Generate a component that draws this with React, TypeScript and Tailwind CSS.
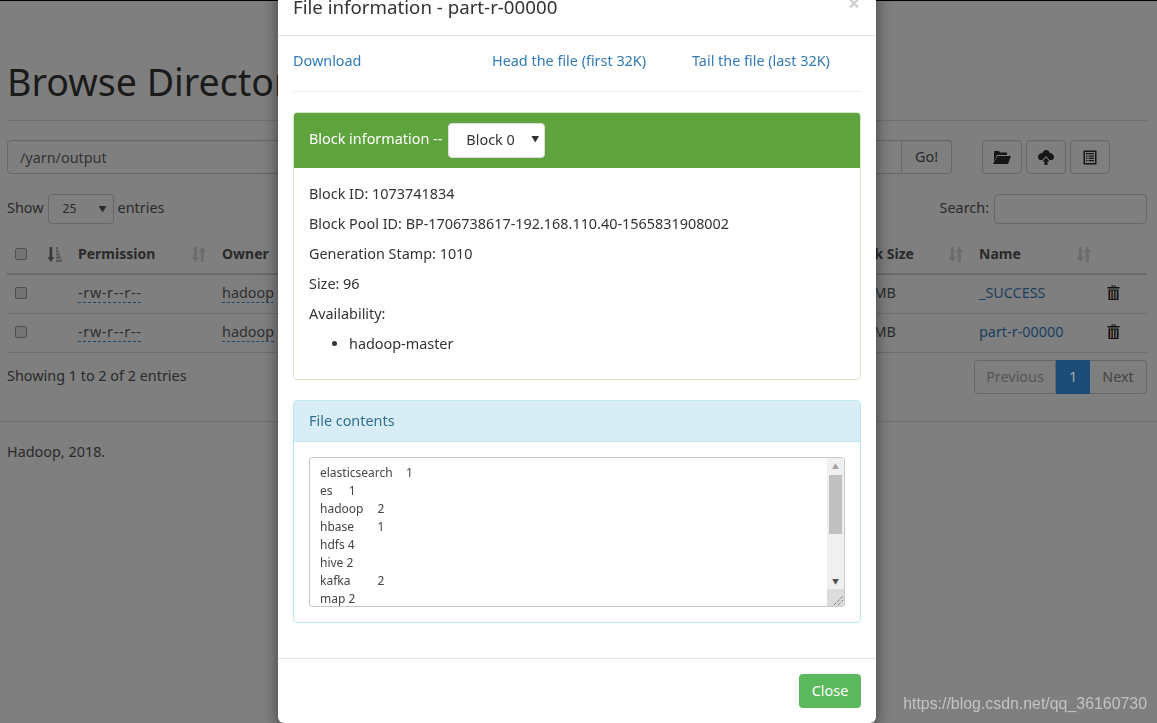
import React from "react";

const font = "font-['Noto_Sans','Noto_Sans_CJK_SC',sans-serif]";

function SortBoth() {
  return (
    <svg width="16" height="15" viewBox="0 0 16 15" className="text-[#6c6c6c]" fill="currentColor">
      <path d="M2.800 0h3v10h2.400L4.300 15 .4 10h2.400zM9.800 5H7.400L11.300 0l3.900 5h-2.400v10h-3z" />
    </svg>
  );
}
function SortAsc() {
  return (
    <svg width="15" height="15" viewBox="0 0 15 15">
      <path d="M2.500 0h2.800v10h2L3.900 15 .5 10h2z" fill="#3a3a3a" />
      <path d="M9 0h2v2.200H9zM9 3.200h3v2.200H9zM9 6.400h4v2.200H9zM9 9.600h5v2.200H9zM9 12.800h6V15H9z" fill="#585858" />
    </svg>
  );
}
function Trash() {
  return (
    <svg width="13" height="15" viewBox="0 0 13 15">
      <path d="M4.500 0.500h4v1.500h4v1.500H.5V2h4zM5.500 1.300v.7h2v-.7z" fill="#111" fillRule="evenodd" />
      <path d="M1.500 4.500h10v10.500h-10z" fill="#111" />
      <path d="M3 5.500h1.500V14H3z" fill="#8a5a5a" />
      <path d="M5.750 5.500h1.500V14h-1.500z" fill="#6e7a52" />
      <path d="M8.500 5.500H10V14H8.500z" fill="#5a6a8a" />
    </svg>
  );
}
function FolderOpen() {
  return (
    <svg width="18" height="14" viewBox="0 0 18 14" fill="#161616">
      <path d="M1 1h5l1 1.500h7V5H4L1 12z" />
      <path d="M4.500 6H18l-3 8H0z" />
    </svg>
  );
}
function CloudUpload() {
  return (
    <svg width="16" height="15" viewBox="0 0 16 15" fill="#161616">
      <path d="M4.500 3C5 1 6.500 0 8 0c2 0 3.300 1.200 3.700 3C14 3 16 4.800 16 7c0 1.500-1 2.600-2 3h-2.500L8 6 4.500 10H2C.8 9.500 0 8.300 0 7c0-2 2-4 4.500-4z" />
      <path d="M8 7.500 11.500 11.500H9.500V15h-3v-3.500h-2z" />
    </svg>
  );
}
function ListAlt() {
  return (
    <svg width="14" height="15" viewBox="0 0 14 15">
      <path d="M.5.500h13v14H.5z" fill="#161616" />
      <path d="M2 2h10v11H2z" fill="#7f7f7f" />
      <path d="M3 3h8v1.200H3zM3 5.500h1.500v1.200H3zM5.500 5.500H11v1.200H5.500zM3 7.800h1.500V9H3zM5.500 7.800H11V9H5.500zM3 10.100h1.500v1.200H3zM5.500 10.100H11v1.200H5.500z" fill="#161616" />
    </svg>
  );
}

function Check() {
  return <div className="w-3 h-3 rounded-[2px] border border-[#4f4f4f] bg-[#747474]" />;
}

function Row({ name }: { name: string }) {
  const dashed = "text-[#2f2f2f] border-b border-dashed border-[#1a4a72]";
  return (
    <tr className="border-b border-[#6f6f6f] h-[39px] [&>td]:pb-[2px]">
      <td className="pl-2"><Check /></td>
      <td />
      <td><span className={`${dashed} tracking-[0.65px]`}>-rw-r--r--</span></td>
      <td><span className={dashed}>hadoop</span></td>
      <td />
      <td />
      <td />
      <td />
      <td>128 MB</td>
      <td className="text-[#1a3f60]">{name}</td>
      <td><Trash /></td>
    </tr>
  );
}

function Th({ label }: { label: string }) {
  return (
    <th className="text-left font-bold text-[14px]">
      <div className="flex items-center justify-between pr-[15px]">
        <span>{label}</span>
        <SortBoth />
      </div>
    </th>
  );
}

function Page() {
  return (
    <div className="min-h-[723px] border-t border-black bg-[#7f7f7f] text-[#2a2a2a] text-[14.4px] leading-[20px]">
      <div className="pl-[7px] pr-[10px]">
        <div className="pt-[56px] pb-[13px] border-b border-[#707070]">
          <h1 className="text-[37.6px] leading-[50px] font-normal text-[#1a1a1a]">Browse Directory</h1>
        </div>
        <div className="mt-[19px] flex">
          <div className="flex flex-1">
            <div className="flex-1 h-[34px] rounded-l border border-[#666] px-3 pt-[2px] flex items-center text-[#333]">/yarn/output</div>
            <div className="w-[50px] h-[34px] rounded-r border border-l-0 border-[#666] flex items-center justify-center">Go!</div>
          </div>
          <div className="ml-[30px] mr-[37px] flex gap-[4px]">
            <div className="w-[40px] h-[34px] rounded border border-[#666] flex items-center justify-center"><FolderOpen /></div>
            <div className="w-[40px] h-[34px] rounded border border-[#666] flex items-center justify-center"><CloudUpload /></div>
            <div className="w-[40px] h-[34px] rounded border border-[#666] flex items-center justify-center"><ListAlt /></div>
          </div>
        </div>
        <div className="mt-[20px] flex items-center justify-between h-[30px]">
          <div className="flex items-center gap-[4px]">
            <span className="mb-[2px]">Show</span>
            <div className="w-[66px] h-[30px] rounded border border-[#666] flex items-center justify-between pl-[14px] pr-[6px] text-[12px]">
              <span>25</span><span className="text-[8px]">▼</span>
            </div>
            <span className="mb-[2px]">entries</span>
          </div>
          <div className="flex items-center gap-[5px]">
            <span className="mb-[2px]">Search:</span>
            <div className="w-[153px] h-[30px] rounded border border-[#666]" />
          </div>
        </div>
        <table className="mt-[11px] w-[1140px] table-fixed border-collapse">
          <colgroup>
            <col className="w-[40px]" /><col className="w-[31px]" /><col className="w-[144px]" />
            <col className="w-[120px]" /><col className="w-[120px]" /><col className="w-[80px]" />
            <col className="w-[183px]" /><col className="w-[120px]" /><col className="w-[134px]" />
            <col className="w-[128px]" /><col className="w-[40px]" />
          </colgroup>
          <thead>
            <tr className="border-b-2 border-[#6a6a6a] h-[39px]">
              <th className="pl-2 text-left"><Check /></th>
              <th className="text-left"><SortAsc /></th>
              <Th label="Permission" />
              <Th label="Owner" />
              <Th label="Group" />
              <Th label="Size" />
              <Th label="Last Modified" />
              <Th label="Replication" />
              <Th label="Block Size" />
              <Th label="Name" />
              <th />
            </tr>
          </thead>
          <tbody>
            <Row name="_SUCCESS" />
            <Row name="part-r-00000" />
          </tbody>
        </table>
        <div className="mt-[7px] flex items-start justify-between">
          <span className="mt-[6px]">Showing 1 to 2 of 2 entries</span>
          <div className="flex h-[34px] items-stretch">
            <div className="w-[82px] rounded-l border border-[#666] flex items-center justify-center text-[#555]">Previous</div>
            <div className="w-[34px] bg-[#1b4d78] text-[#a8a8a8] flex items-center justify-center">1</div>
            <div className="w-[57px] rounded-r border border-l-0 border-[#666] flex items-center justify-center text-[#444]">Next</div>
          </div>
        </div>
      </div>
      <div className="mt-[27px] border-t border-[#707070] px-[7px] pt-[20px]">Hadoop, 2018.</div>
    </div>
  );
}

const lines = ["elasticsearch\t1", "es\t1", "hadoop\t2", "hbase\t1", "hdfs 4", "hive 2", "kafka\t2", "map 2"];

function Modal() {
  return (
    <div className="fixed left-[278px] top-[-21px] w-[598px] h-[744px] rounded-md bg-white text-[#333] text-[14.4px] leading-[20px] shadow-[0_5px_15px_rgba(0,0,0,0.5)] flex flex-col">
      <div className="h-[57px] border-b border-[#e5e5e5] px-[15px] pt-[15px] relative">
        <div className="text-[18.7px] leading-[26px]">File information - part-r-00000</div>
        <span className="absolute right-[16px] top-[14px] text-[21px] leading-[21px] font-bold text-[#cfcfcf]">×</span>
      </div>
      <div className="flex-1 px-[15px] pt-[15px]">
        <div className="flex text-[#337ab7] h-[20px]">
          <span className="w-[199px]">Download</span>
          <span className="w-[200px]">Head the file (first 32K)</span>
          <span>Tail the file (last 32K)</span>
        </div>
        <div className="mt-[20px] border-t border-[#eee]" />
        <div className="mt-[20px] rounded border border-[#d6e9c6] h-[268px]">
          <div className="h-[55px] bg-[#5fa33e] flex items-center px-[15px] text-white rounded-t-[3px]">
            <span className="mb-[3px]">Block information --</span>
            <div className="ml-[6px] w-[97px] h-[35px] rounded bg-white text-[#333] border border-[#ddd] flex items-center justify-between pl-[17px] pr-[5px]">
              <span className="mb-[2px]">Block 0</span><span className="text-[8px] mb-[3px]">▼</span>
            </div>
          </div>
          <div className="px-[15px] pt-[16px] flex flex-col gap-[10px]">
            <div>Block ID: 1073741834</div>
            <div>Block Pool ID: BP-1706738617-192.168.110.40-1565831908002</div>
            <div>Generation Stamp: 1010</div>
            <div>Size: 96</div>
            <div>Availability:</div>
            <ul className="list-disc pl-[40px]"><li>hadoop-master</li></ul>
          </div>
        </div>
        <div className="mt-[20px] rounded border border-[#bce8f1] h-[223px]">
          <div className="h-[41px] bg-[#d9edf7] border-b border-[#bce8f1] px-[15px] flex items-center text-[#31708f] rounded-t-[3px]">File contents</div>
          <div className="mx-[15px] mt-[15px] h-[150px] rounded-[3px] border border-[#c8c8c8] flex overflow-hidden">
            <div className="flex-1 pl-[10px] pt-[6px] text-[12px] leading-[18px] whitespace-pre [tab-size:28.7px] text-[#444] overflow-hidden">
              {lines.map((l) => <div key={l}>{l}</div>)}
            </div>
            <div className="w-[17px] bg-[#f0f0f0] flex flex-col items-center">
              <div className="h-[17px] flex items-center justify-center text-[#a3a3a3] text-[7px]">▲</div>
              <div className="w-[13px] h-[59px] bg-[#c0c0c0]" />
              <div className="flex-1" />
              <div className="h-[14px] flex items-center justify-center text-[#505050] text-[7px]">▼</div>
              <div className="w-[17px] h-[17px] bg-[#dcdcdc] flex items-end justify-end">
                <svg width="11" height="11" viewBox="0 0 11 11" stroke="#555" strokeWidth="1" strokeDasharray="1 1"><path d="M1 10 10 1M5 10 10 5" /></svg>
              </div>
            </div>
          </div>
        </div>
      </div>
      <div className="h-[65px] border-t border-[#e5e5e5] px-[15px] flex items-center justify-end">
        <div className="w-[62px] h-[34px] rounded bg-[#5cb85c] text-white flex items-center justify-center">Close</div>
      </div>
    </div>
  );
}

export default function App() {
  return (
    <div className={`relative h-[723px] overflow-hidden ${font}`}>
      <Page />
      <Modal />
      <span className="fixed right-[10px] bottom-[9px] text-[15.9px] leading-[20px] text-[#c3c3c3] font-['Liberation_Sans',sans-serif]">https://blog.csdn.net/qq_36160730</span>
    </div>
  );
}
